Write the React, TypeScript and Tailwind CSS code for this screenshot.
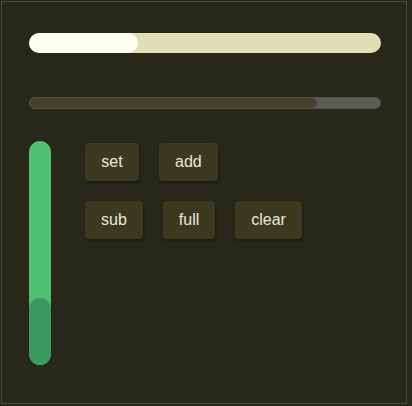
import React from 'react';

const font = { fontFamily: '"Liberation Sans", Arial, sans-serif' };

const Btn: React.FC<{ label: string }> = ({ label }) => (
  <button className="h-[38px] px-4 rounded-[4px] bg-[#3a3a21] text-[#e8e8d8] text-base shadow-[1px_2px_3px_rgba(0,0,0,0.35)]">
    {label}
  </button>
);

const App: React.FC = () => {
  const top = 31; // percent
  const mid = 82;
  const vert = 30;

  return (
    <div className="w-[412px] h-[406px] bg-[#27271a] pt-px pl-px" style={font}>
      <div className="w-[406px] h-[403px] border border-[#4a4a36] pt-[31px] px-[27px]">
        <div className="h-5 w-[352px] rounded-full bg-[#e0dfb8] overflow-hidden">
          <div className="h-full rounded-full bg-[#fffff2]" style={{ width: `${top}%` }} />
        </div>

        <div className="mt-11 h-3 w-[352px] rounded-full bg-[#5d5d56] overflow-hidden border border-[#535345]">
          <div className="h-full rounded-full bg-[#42422c]" style={{ width: `${mid}%` }} />
        </div>

        <div className="mt-8 flex gap-[34px]">
          <div className="w-[22px] h-[224px] rounded-full bg-[#50bf72] overflow-hidden flex flex-col justify-end">
            <div className="w-full rounded-full bg-[#3b9a60]" style={{ height: `${vert}%` }} />
          </div>
          <div className="pt-[2px] flex flex-col gap-5">
            <div className="flex gap-5">
              <button className="h-[38px] w-[54px] rounded-[4px] bg-[#3a3a21] text-[#e8e8d8] text-base shadow-[1px_2px_3px_rgba(0,0,0,0.35)]">
                set
              </button>
              <Btn label="add" />
            </div>
            <div className="flex gap-5">
              <Btn label="sub" />
              <Btn label="full" />
              <Btn label="clear" />
            </div>
          </div>
        </div>
      </div>
    </div>
  );
};

export default App;
